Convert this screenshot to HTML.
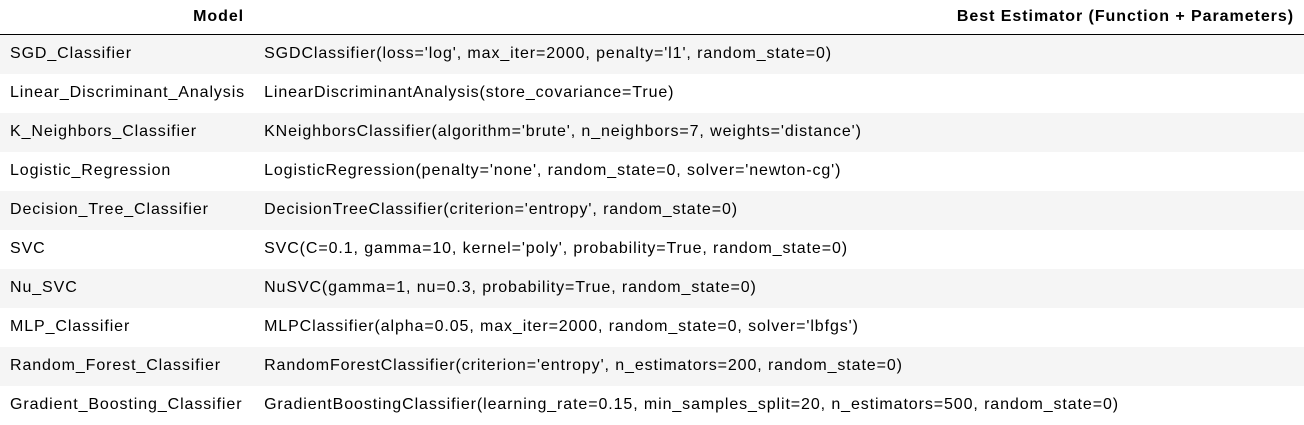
<!DOCTYPE html>
<html><head><style>
body{margin:0;background:#fff;font-family:"Liberation Sans",Arial,sans-serif;font-size:16px;color:#000;letter-spacing:0.9px}
table{border-collapse:collapse;width:1304px}
th{font-weight:bold;text-align:right;height:34px;padding:0 10px;border-bottom:1px solid #000;box-sizing:border-box;vertical-align:middle;letter-spacing:0.95px}
td{height:39px;padding:0 10px;text-align:left;white-space:nowrap;vertical-align:middle}
tbody tr:nth-child(odd){background:#f5f5f5}
td:first-child{padding-right:9px}
td:first-child,th:first-child{width:233px}
</style></head><body>
<table>
<thead><tr><th>Model</th><th>Best Estimator (Function + Parameters)</th></tr></thead>
<tbody>
<tr><td>SGD_Classifier</td><td>SGDClassifier(loss='log', max_iter=2000, penalty='l1', random_state=0)</td></tr>
<tr><td>Linear_Discriminant_Analysis</td><td>LinearDiscriminantAnalysis(store_covariance=True)</td></tr>
<tr><td>K_Neighbors_Classifier</td><td>KNeighborsClassifier(algorithm='brute', n_neighbors=7, weights='distance')</td></tr>
<tr><td>Logistic_Regression</td><td>LogisticRegression(penalty='none', random_state=0, solver='newton-cg')</td></tr>
<tr><td>Decision_Tree_Classifier</td><td>DecisionTreeClassifier(criterion='entropy', random_state=0)</td></tr>
<tr><td>SVC</td><td>SVC(C=0.1, gamma=10, kernel='poly', probability=True, random_state=0)</td></tr>
<tr><td>Nu_SVC</td><td>NuSVC(gamma=1, nu=0.3, probability=True, random_state=0)</td></tr>
<tr><td>MLP_Classifier</td><td>MLPClassifier(alpha=0.05, max_iter=2000, random_state=0, solver='lbfgs')</td></tr>
<tr><td>Random_Forest_Classifier</td><td>RandomForestClassifier(criterion='entropy', n_estimators=200, random_state=0)</td></tr>
<tr><td>Gradient_Boosting_Classifier</td><td>GradientBoostingClassifier(learning_rate=0.15, min_samples_split=20, n_estimators=500, random_state=0)</td></tr>
</tbody></table>
</body></html>
